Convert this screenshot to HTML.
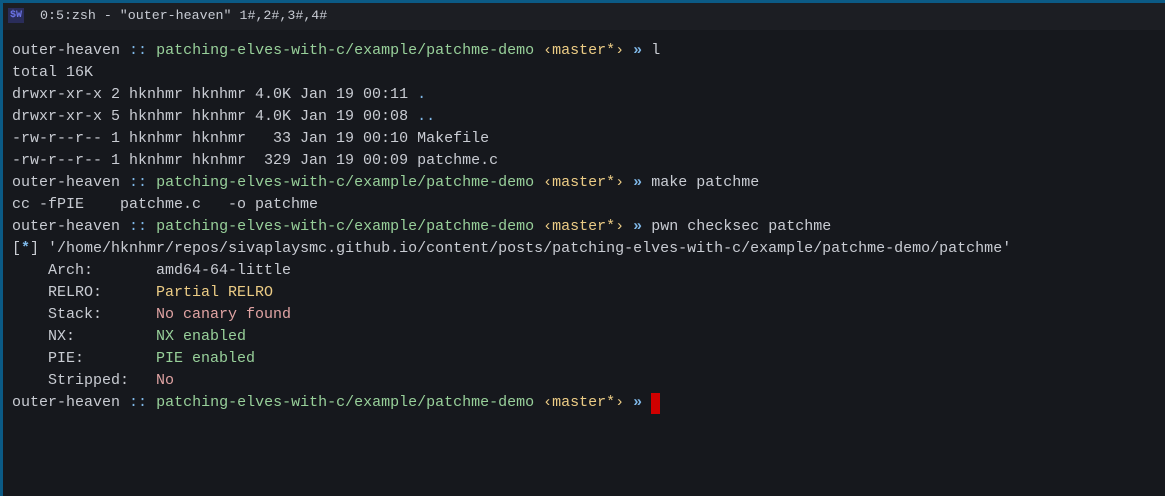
<!DOCTYPE html>
<html><head><meta charset="utf-8"><style>
html,body{margin:0;padding:0;}
body{width:1165px;height:496px;background:#0b5a85;overflow:hidden;position:relative;font-family:"Liberation Mono",monospace;}
#win{position:absolute;left:3px;top:3px;right:0;bottom:0;background:#16181d;}
#title{position:absolute;left:0;top:0;right:0;height:27px;background:#1c1e23;}
#icon{position:absolute;left:5px;top:5px;width:16px;height:15px;background:#2a2d5a;color:#6c74e8;font-size:10px;line-height:15px;text-align:center;font-weight:bold;}
#ttext{position:absolute;left:37px;top:5px;font-size:13.3px;line-height:16px;color:#c8ccd4;white-space:pre;}
#term{position:absolute;left:9px;top:37px;font-size:15px;line-height:22px;color:#c9ccd3;white-space:pre;}
.c{color:#7fb8e8}.g{color:#98d09a}.y{color:#eccc85}.r{color:#e0a3a3}.b{color:#7fb8e8;font-weight:bold}
#cur{position:absolute;left:648px;top:390px;width:9px;height:21px;background:#d00000;}
</style></head><body><div id="win">
<div id="title"><div id="icon">$W</div><div id="ttext">0:5:zsh - "outer-heaven" 1#,2#,3#,4#</div></div>
<div id="term">outer-heaven <span class="c">::</span> <span class="g">patching-elves-with-c/example/patchme-demo</span> <span class="y">‹master*›</span> <span class="b">»</span> l
total 16K
drwxr-xr-x 2 hknhmr hknhmr 4.0K Jan 19 00:11 <span class="c">.</span>
drwxr-xr-x 5 hknhmr hknhmr 4.0K Jan 19 00:08 <span class="c">..</span>
-rw-r--r-- 1 hknhmr hknhmr   33 Jan 19 00:10 Makefile
-rw-r--r-- 1 hknhmr hknhmr  329 Jan 19 00:09 patchme.c
outer-heaven <span class="c">::</span> <span class="g">patching-elves-with-c/example/patchme-demo</span> <span class="y">‹master*›</span> <span class="b">»</span> make patchme
cc -fPIE    patchme.c   -o patchme
outer-heaven <span class="c">::</span> <span class="g">patching-elves-with-c/example/patchme-demo</span> <span class="y">‹master*›</span> <span class="b">»</span> pwn checksec patchme
[<span class="b">*</span>] '/home/hknhmr/repos/sivaplaysmc.github.io/content/posts/patching-elves-with-c/example/patchme-demo/patchme'
    Arch:       amd64-64-little
    RELRO:      <span class="y">Partial RELRO</span>
    Stack:      <span class="r">No canary found</span>
    NX:         <span class="g">NX enabled</span>
    PIE:        <span class="g">PIE enabled</span>
    Stripped:   <span class="r">No</span>
outer-heaven <span class="c">::</span> <span class="g">patching-elves-with-c/example/patchme-demo</span> <span class="y">‹master*›</span> <span class="b">»</span> </div>
<div id="cur"></div>
</div></body></html>
